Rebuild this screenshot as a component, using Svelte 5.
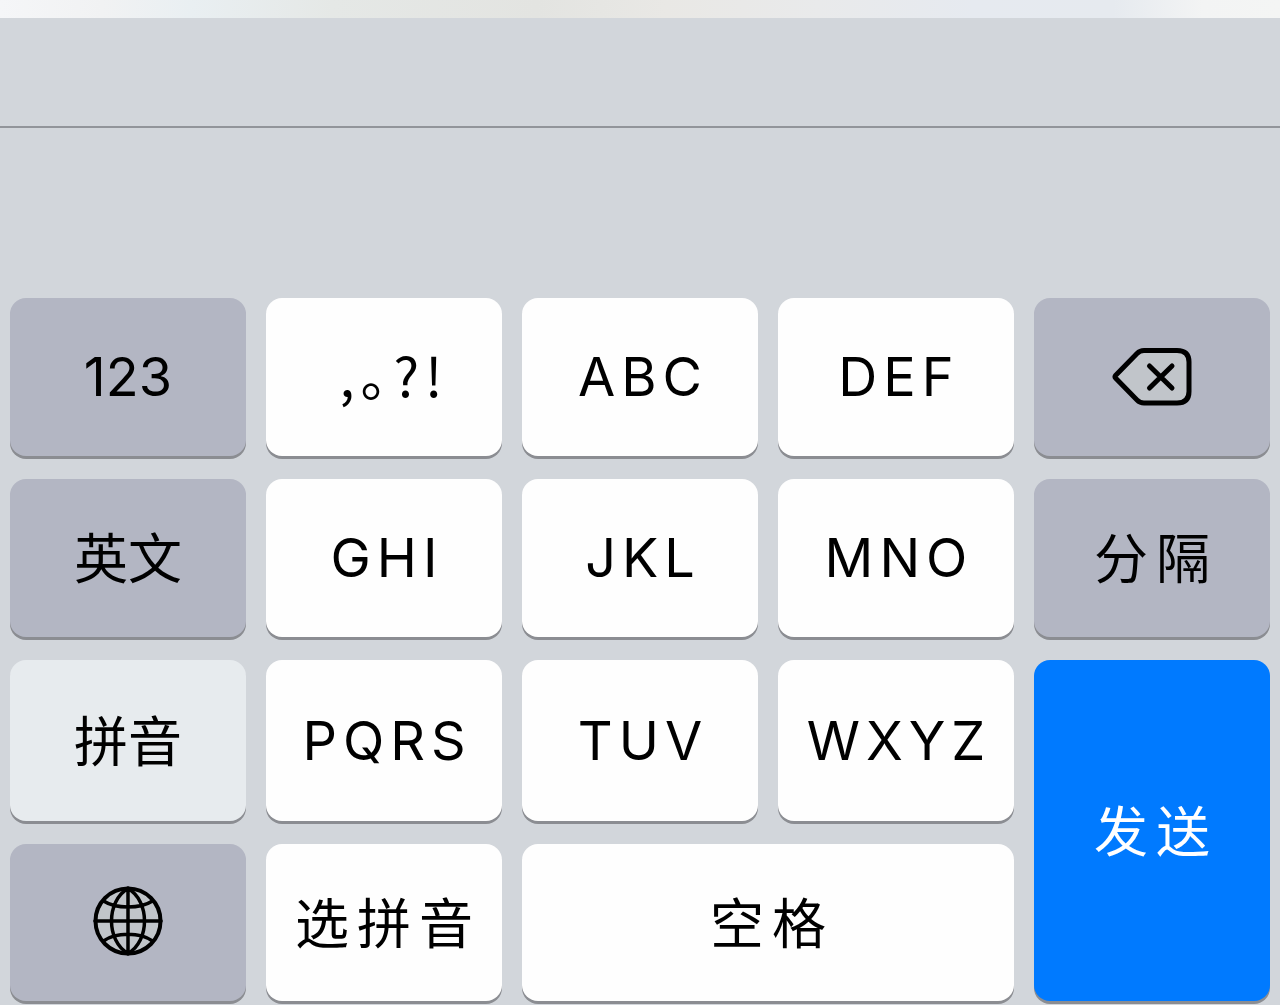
<script lang="ts">
  type Key = {
    label: string;
    tone?: 'light' | 'dark' | 'active' | 'send';
    text?: 'latin' | 'digits' | 'punctuation' | 'hanzi' | 'hanzi spaced';
    wide?: boolean;
    icon?: 'delete' | 'globe';
  };

  const keys: Key[] = [
    { label: '123', tone: 'dark', text: 'digits' },
    { label: ',。?!', text: 'punctuation' },
    { label: 'ABC' },
    { label: 'DEF' },
    { label: '删除', tone: 'dark', icon: 'delete' },
    { label: '英文', tone: 'dark', text: 'hanzi' },
    { label: 'GHI' },
    { label: 'JKL' },
    { label: 'MNO' },
    { label: '分隔', tone: 'dark', text: 'hanzi spaced' },
    { label: '拼音', tone: 'active', text: 'hanzi' },
    { label: 'PQRS' },
    { label: 'TUV' },
    { label: 'WXYZ' },
    { label: '发送', tone: 'send', text: 'hanzi spaced' },
    { label: '切换键盘', tone: 'dark', icon: 'globe' },
    { label: '选拼音', text: 'hanzi spaced' },
    { label: '空格', text: 'hanzi spaced', wide: true },
  ];
</script>

<div class="backdrop"></div>
<main class="keyboard" lang="zh-CN">
  <div class="toolbar"></div>
  <div class="candidates"></div>
  <div class="keys">
    {#each keys as key}
      <button
        type="button"
        class="key {key.tone ?? 'light'} {key.icon ? '' : key.text ?? 'latin'}"
        class:wide={key.wide}
        aria-label={key.icon ? key.label : undefined}
      >
        {#if key.icon === 'delete'}
          <svg width="80" height="60" viewBox="0 0 80 60" aria-hidden="true">
            <path
              class="body"
              d="M32 3.500H65Q77 3.500 77 15V44.500Q77 56 65 56H32Q28 56 25 53L3.500 31Q2.500 29.800 3.500 28.500L25 6.500Q28 3.500 32 3.500Z"
            />
            <path class="cross" d="M37.500 19 60 41M60 19 37.500 41" />
          </svg>
        {:else if key.icon === 'globe'}
          <svg width="70" height="74" viewBox="0 0 70 74" aria-hidden="true">
            <circle class="body" cx="35" cy="35" r="32.500" />
            <path
              class="grid"
              d="M35 2V68M2 35H68M35 2.500C13 15 13 55 35 67.500M35 2.500C57 15 57 55 35 67.500M10.500 15C23 23 47 23 59.500 15M10.500 55C23 46 47 46 59.500 55"
            />
          </svg>
        {:else}
          {key.label}
        {/if}
      </button>
    {/each}
  </div>
</main>

<style>
  :global(body) {
    margin: 0;
    background: #d2d6db;
  }

  .backdrop {
    height: 18px;
    background: linear-gradient(
      90deg,
      #f5f6f8 0%,
      #f1f2f3 8%,
      #e9eff2 15%,
      #e5e8e6 26%,
      #e3e4e1 42%,
      #e9e8e5 52%,
      #e9eaeb 64%,
      #e6eaf0 76%,
      #e6eaef 87%,
      #f3f4f4 94%,
      #f4f5f4 100%
    );
  }

  .keyboard {
    background: #d2d6db;
    font-family: Inter, 'Noto Sans CJK SC', sans-serif;
  }

  .toolbar {
    height: 108px;
    border-bottom: 2px solid #92959a;
  }

  .candidates {
    height: 170px;
  }

  .keys {
    display: grid;
    grid-template-columns: repeat(5, 1fr);
    grid-template-rows: 158px 158px 161px 157px;
    gap: 23px 20px;
    padding: 0 10px 4px;
  }

  .key {
    display: flex;
    align-items: center;
    justify-content: center;
    padding: 0;
    border: none;
    border-radius: 16px;
    box-shadow: 0 3px 0 #8b8d92;
    color: #000;
    font-family: inherit;
    font-size: 54px;
    font-weight: 400;
    line-height: 64px;
    white-space: nowrap;
    cursor: pointer;
  }

  /* the left padding balances the space after the last letter */
  .latin {
    padding-left: 6px;
    letter-spacing: 6px;
  }

  .punctuation {
    padding: 0 0 6px 20px;
    font-family: 'Noto Sans CJK SC', sans-serif;
    font-feature-settings: 'halt';
    letter-spacing: 6px;
  }

  .hanzi {
    padding-top: 4px;
  }

  .spaced {
    padding-left: 8px;
    letter-spacing: 8px;
  }

  .light {
    background: #fefefe;
  }

  .dark {
    background: #b3b6c3;
  }

  .active {
    background: #e7ebee;
  }

  .send {
    grid-row: span 2;
    background: #007aff;
    color: #fff;
  }

  .wide {
    grid-column: span 2;
  }

  svg {
    display: block;
    fill: none;
    stroke: #000;
    stroke-linecap: round;
    stroke-linejoin: round;
  }

  .body {
    fill: #c1c5ca;
    stroke-width: 5;
  }

  .cross {
    stroke-width: 5;
  }

  circle.body {
    stroke-width: 4;
  }

  .grid {
    stroke-width: 3.500;
  }
</style>
